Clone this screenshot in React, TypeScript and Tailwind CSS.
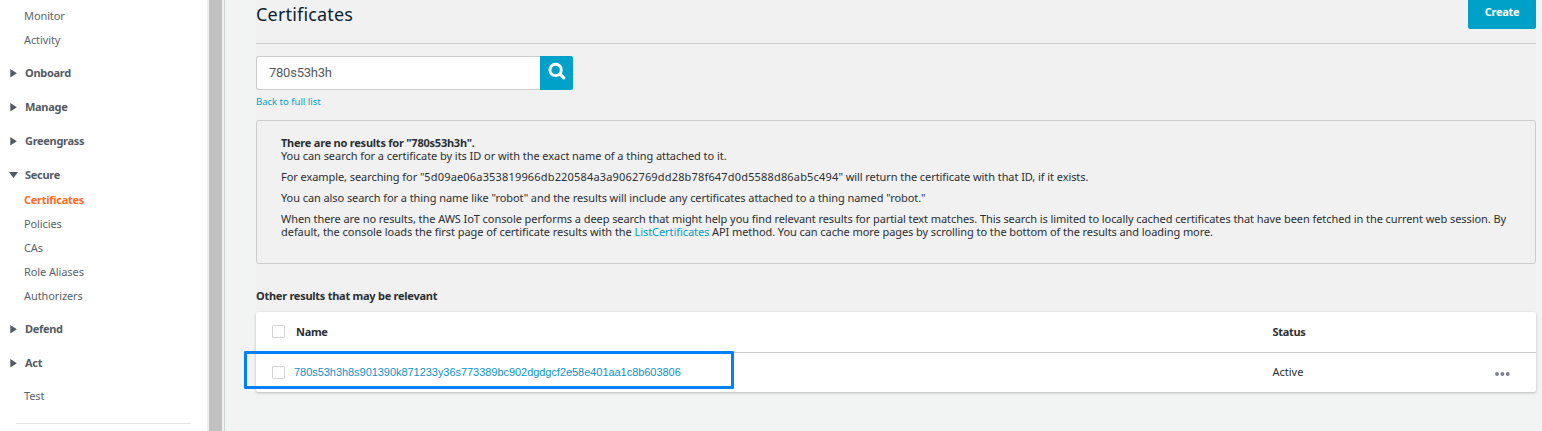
import React from "react";

const link = "text-[#00a1c9]";

function Group({ label, open = false }: { label: string; open?: boolean }) {
  return (
    <div className="mt-2 flex h-[26px] items-center text-[11px] font-bold tracking-[-0.3px] text-[#545b64]">
      <svg className="ml-[9px] mr-[7px] h-[9px] w-[9px] fill-[#545b64]" viewBox="0 0 9 9">
        {open ? <path d="M0 1h9L4.5 7z" /> : <path d="M1.3 0v8.6L7.9 4.3z" />}
      </svg>
      <span className="pb-[2px]">{label}</span>
    </div>
  );
}

function Item({ label, active = false }: { label: string; active?: boolean }) {
  return (
    <div className={active ? "flex h-6 items-center pl-6 pb-[2px] text-[11px] font-bold tracking-[-0.27px] text-[#ff6a26]" : "flex h-6 items-center pl-6 pb-[2px] text-[11px] tracking-[-0.1px] text-[#5a636b]"}>
      <span>{label}</span>
    </div>
  );
}

function Check() {
  return <span className="h-[13px] w-[13px] shrink-0 rounded-[1px] border border-[#d5d5d5] bg-white" />;
}

export default function App() {
  return (
    <div className="flex h-[431px] w-[1542px] overflow-hidden bg-[#f2f3f3] font-['Noto_Sans',sans-serif] text-[11px] leading-[13px] text-[#2b2f33]">
      <nav className="w-[207px] shrink-0 bg-white pt-1">
        <Item label="Monitor" />
        <Item label="Activity" />
        <Group label="Onboard" />
        <Group label="Manage" />
        <Group label="Greengrass" />
        <Group label="Secure" open />
        <Item label="Certificates" active />
        <Item label="Policies" />
        <Item label="CAs" />
        <Item label="Role Aliases" />
        <Item label="Authorizers" />
        <Group label="Defend" />
        <Group label="Act" />
        <div className="mt-2">
          <Item label="Test" />
        </div>
        <div className="ml-4 mt-[15px] h-px w-[175px] bg-[#e3e7e7]" />
      </nav>
      <div className="w-[17px] shrink-0 border-l-2 border-r-2 border-[#f0f0f0] bg-[#c1c1c1]" />
      <div className="w-px shrink-0 bg-[#ccd1d1]" />
      <main className="ml-[31px] w-[1280px] shrink-0">
        <div className="bg-[#f1f1f1]">
          <header className="flex h-11 items-start justify-between border-b border-[#ccc]">
            <h1 className="pt-[2px] text-[18px] leading-6 tracking-[0.18px] text-[#0b2230]">Certificates</h1>
            <button className="h-[29px] w-[68px] rounded-b-[2px] bg-[#00a1c9] pb-[6px] text-[11px] font-bold tracking-[-0.3px] text-white">Create</button>
          </header>
          <div className="flex pt-3">
            <div className="flex h-[34px] w-[284px] items-center rounded-l-[3px] border border-r-0 border-[#ccc] bg-white pb-[2px] pl-3 font-['Roboto',sans-serif] text-[13px] tracking-[-0.25px] text-[#545b64]">
              <span>780s53h3h</span>
            </div>
            <button className="flex h-[34px] w-[33px] items-center justify-center rounded-r-[2px] bg-[#00a1c9]">
              <svg className="mb-1 h-[18px] w-[18px]" viewBox="0 0 18 18" fill="none" stroke="#fff">
                <circle cx="7.6" cy="7.9" r="5.7" strokeWidth="2.9" />
                <path d="M11.9 12L15.8 15.8" strokeWidth="3.2" strokeLinecap="round" />
              </svg>
            </button>
          </div>
          <a className={`mt-[5px] flex h-3 items-center text-[9.5px] ${link}`}><span>Back to full list</span></a>
          <section className="mt-[13px] h-36 rounded-[3px] border border-[#ccc] pl-6 pt-[15px]">
            <p className="whitespace-nowrap font-bold tracking-[-0.23px]">There are no results for "780s53h3h".</p>
            <p className="whitespace-nowrap tracking-[-0.055px]">You can search for a certificate by its ID or with the exact name of a thing attached to it.</p>
            <p className="mt-2 whitespace-nowrap tracking-[-0.07px]">For example, searching for "<span className="tracking-[0.17px]">5d09ae06a353819966db220584a3a9062769dd28b78f647d0d5588d86ab5c494</span>" will return the certificate with that ID, if it exists.</p>
            <p className="mt-2 whitespace-nowrap tracking-[-0.077px]">You can also search for a thing name like "robot" and the results will include any certificates attached to a thing named "robot."</p>
            <p className="mt-2 whitespace-nowrap tracking-[-0.074px]">When there are no results, the AWS IoT console performs a deep search that might help you find relevant results for partial text matches. This search is limited to locally cached certificates that have been fetched in the current web session. By</p>
            <p className="whitespace-nowrap tracking-[-0.075px]"><span className="tracking-[-0.045px]">default, the console loads the first page of certificate results with the </span><a className={link}>ListCertificates</a> API method. You can cache more pages by scrolling to the bottom of the results and loading more.</p>
          </section>
          <h2 className="flex h-12 items-end pb-[10px] font-bold tracking-[-0.26px]"><span>Other results that may be relevant</span></h2>
        </div>
        <section className="relative h-20 rounded-[2px] bg-white shadow-[0_1px_3px_rgba(0,0,0,0.25)]">
          <div className="flex h-[41px] items-center border-b border-[#ccc] pb-px pl-4 font-bold tracking-[-0.3px]">
            <Check />
            <span className="ml-[11px] w-[976.5px]">Name</span>
            <span>Status</span>
          </div>
          <div className="flex h-[39px] items-center pl-4">
            <Check />
            <a className="ml-[9px] w-[978.5px] font-['Liberation_Sans',sans-serif] text-[11px] tracking-[-0.045px] text-[#0b93cf]">780s53h3h8s901390k871233y36s773389bc902dgdgcf2e58e401aa1c8b603806</a>
            <span className="w-[222px] pb-[2px]">Active</span>
            <svg className="mt-[3px] h-1 w-[15px] fill-[#7b7f85]" viewBox="0 0 15 4">
              <circle cx="2" cy="2" r="1.9" /><circle cx="7.4" cy="2" r="1.9" /><circle cx="12.8" cy="2" r="1.9" />
            </svg>
          </div>
          <div className="absolute -left-3 top-[39px] h-[38px] w-[490px] rounded-[1px] border-[3px] border-[#0080ff]" />
        </section>
      </main>
    </div>
  );
}
